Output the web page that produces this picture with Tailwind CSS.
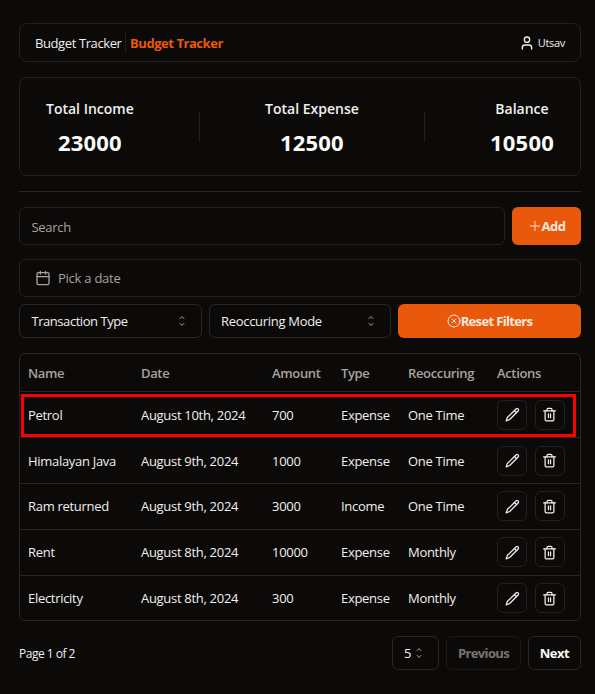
<!DOCTYPE html>
<html lang="en">
<head>
<meta charset="utf-8">
<title>Budget Tracker</title>
<script src="https://cdn.jsdelivr.net/npm/@tailwindcss/browser@4"></script>
</head>
<body class="bg-[#0c0a09] text-[#f0efee] font-['Open_Sans','Noto_Sans',sans-serif] text-[13px] leading-[18px]">
<svg class="hidden">
  <symbol id="updown" viewBox="0 0 15 15"><path fill="currentColor" fill-rule="evenodd" d="M4.93 5.43a.45.45 0 0 0 .64 0L7.5 3.5l1.93 1.93a.45.45 0 1 0 .64-.64L7.82 2.54a.45.45 0 0 0-.64 0L4.93 4.79a.45.45 0 0 0 0 .64Zm5.14 4.14a.45.45 0 0 0-.64 0L7.5 11.5 5.57 9.57a.45.45 0 1 0-.64.64l2.250 2.250a.45.45 0 0 0 .64 0l2.250-2.250a.45.45 0 0 0 0-.64Z"/></symbol>
  <symbol id="pencil" viewBox="0 0 24 24" fill="none" stroke="currentColor" stroke-width="2" stroke-linecap="round" stroke-linejoin="round"><path d="M18 2.700a2.400 2.400 0 0 1 3.300 3.300L7.500 20 1.800 22.200 4 16.500Z"/><path d="m15 5.500 3.500 3.500"/></symbol>
  <symbol id="trash" viewBox="0 0 24 24" fill="none" stroke="currentColor" stroke-width="2" stroke-linecap="round" stroke-linejoin="round"><path d="M2.500 6h19"/><path d="M19 6v14c0 1-1 2-2 2H7c-1 0-2-1-2-2V6"/><path d="M8 6V4c0-1 1-2 2-2h4c1 0 2 1 2 2v2"/><path d="M10.300 11v6M13.700 11v6"/></symbol>
</svg>
<main class="w-[595px] h-[694px] pl-[19px] pr-[14px] pt-[23px] overflow-hidden">
  <header class="h-[39px] border border-[#232120] rounded-lg flex items-center justify-between px-[15px]">
    <div class="flex items-center">
      <span class="w-[87px] whitespace-nowrap tracking-[-0.4px]">Budget Tracker</span>
      <span class="w-px h-[19px] bg-[#232120] ml-[3px] mr-[4px]"></span>
      <span class="font-bold text-[#ea580c] whitespace-nowrap tracking-[-0.45px]">Budget Tracker</span>
    </div>
    <div class="flex items-center gap-[3px]">
      <svg class="size-[16px]" viewBox="0 0 24 24" fill="none" stroke="currentColor" stroke-width="2" stroke-linecap="round" stroke-linejoin="round"><circle cx="12" cy="7" r="4"/><path d="M19 21v-2a4 4 0 0 0-4-4H9a4 4 0 0 0-4 4v2"/></svg>
      <span class="text-[11px] font-medium tracking-[-0.3px]">Utsav</span>
    </div>
  </header>

  <section class="mt-[15px] h-[99px] border border-[#232120] rounded-lg flex items-center justify-between px-[26px]">
    <div class="text-center"><div class="text-[14px] leading-5 pt-px font-semibold">Total Income</div><div class="mt-[10px] text-[22px] leading-[26px] font-bold text-[#fafaf9] tracking-[0.2px]">23000</div></div>
    <div class="w-px h-[31px] bg-[#232120]"></div>
    <div class="text-center"><div class="text-[14px] leading-5 pt-px font-semibold">Total Expense</div><div class="mt-[10px] text-[22px] leading-[26px] font-bold text-[#fafaf9] tracking-[0.2px]">12500</div></div>
    <div class="w-px h-[31px] bg-[#232120]"></div>
    <div class="text-center"><div class="text-[14px] leading-5 pt-px font-semibold">Balance</div><div class="mt-[10px] text-[22px] leading-[26px] font-bold text-[#fafaf9] tracking-[0.2px]">10500</div></div>
  </section>

  <div class="mt-[15px] h-px bg-[#292725]"></div>

  <div class="mt-[15px] flex gap-[7px]">
    <div class="flex-1 h-[38px] border border-[#232120] rounded-md px-[11.5px] flex items-center pt-[2px] text-[#a8a29e] tracking-[-0.3px]">Search</div>
    <button class="w-[69px] h-[38px] rounded-md bg-[#ea580c] text-[#fae8de] font-bold flex items-center justify-center tracking-[-0.5px]">
      <svg class="size-[14px]" viewBox="0 0 15 15" fill="none" stroke="currentColor" stroke-width="1" stroke-linecap="round"><path d="M7.500 2.500v10M2.500 7.500h10"/></svg>Add</button>
  </div>

  <div class="mt-[14px] h-[38px] border border-[#232120] rounded-md px-[15px] flex items-center text-[#a8a29e]">
    <svg class="size-[16px] mr-[7px]" viewBox="0 0 24 24" fill="none" stroke="currentColor" stroke-width="2" stroke-linecap="round" stroke-linejoin="round"><rect x="3" y="4" width="18" height="18" rx="2"/><path d="M8 2v4M16 2v4M3 10h18"/></svg>
    <span class="tracking-[-0.25px]">Pick a date</span>
  </div>

  <div class="mt-[7px] grid grid-cols-[183px_182px_183px] gap-[7px]">
    <div class="h-[34px] border border-[#292725] rounded-md pl-[11.5px] pr-[12px] flex items-center justify-between"><span class="tracking-[-0.45px] font-medium">Transaction Type</span><svg class="size-[14px] text-[#8b8885]"><use href="#updown"/></svg></div>
    <div class="h-[34px] border border-[#292725] rounded-md pl-[11px] pr-[12px] flex items-center justify-between"><span class="tracking-[-0.3px] font-medium">Reoccuring Mode</span><svg class="size-[14px] text-[#8b8885]"><use href="#updown"/></svg></div>
    <button class="h-[34px] rounded-md bg-[#ea580c] text-[#fae8de] font-bold flex items-center justify-center tracking-[-0.65px]"><svg class="size-[14px]" viewBox="0 0 14 14" fill="none" stroke="currentColor" stroke-width="1" stroke-linecap="round"><circle cx="7" cy="7" r="6"/><path d="m5 5 4 4M9 5l-4 4"/></svg>Reset Filters</button>
  </div>

  <section class="relative mt-[15px] h-[268px] border border-[#292725] rounded-md">
    <div class="h-[38px] grid grid-cols-[113px_131px_69px_67px_89px_1fr] pl-[8px] items-center text-[#a8a29e] font-semibold border-b border-[#292725] tracking-[-0.35px]"><span>Name</span><span>Date</span><span>Amount</span><span>Type</span><span>Reoccuring</span><span>Actions</span></div>
    <div id="rows" class="pt-[0.5px]"></div>
    <div class="absolute left-[1px] top-[40px] w-[555px] h-[43px] border-[3px] border-[#ff0000]"></div>
  </section>

  <footer class="mt-[14px] h-[35px] flex items-center">
    <span class="text-[12px] tracking-[-0.5px] flex-1 pt-[2px]">Page 1 of 2</span>
    <div class="w-[47px] h-[34px] border border-[#292725] rounded-md flex items-center pl-[11px]">5<svg class="size-[14px] ml-px text-[#8b8885]"><use href="#updown"/></svg></div>
    <button class="w-[75px] h-[34px] ml-[7px] border border-[#1b1918] rounded-md font-bold text-[#777573] tracking-[-0.65px]">Previous</button>
    <button class="w-[53px] h-[34px] ml-[7px] border border-[#292725] rounded-md font-bold text-[#fafaf9] tracking-[-0.5px]">Next</button>
  </footer>
</main>
<script>
const data = [
  ["Petrol", "August 10th, 2024", "700", "Expense", "One Time"],
  ["Himalayan Java", "August 9th, 2024", "1000", "Expense", "One Time"],
  ["Ram returned", "August 9th, 2024", "3000", "Income", "One Time"],
  ["Rent", "August 8th, 2024", "10000", "Expense", "Monthly"],
  ["Electricity", "August 8th, 2024", "300", "Expense", "Monthly"]
];
document.getElementById("rows").innerHTML = data.map(r =>
  '<div class="h-[45.75px] grid grid-cols-[113px_131px_69px_67px_89px_1fr] pl-[8px] items-center border-b last:border-b-0 border-[#292725] tracking-[-0.3px]">' +
  r.map(c => '<span class="whitespace-nowrap">' + c + '</span>').join("") +
  '<span class="flex gap-[7.500px]">' + ["pencil", "trash"].map(i =>
    '<button class="size-[30px] border border-[#232120] rounded-md flex items-center justify-center"><svg class="size-[15px]"><use href="#' + i + '"/></svg></button>').join("") +
  '</span></div>').join("");
</script>
</body>
</html>
